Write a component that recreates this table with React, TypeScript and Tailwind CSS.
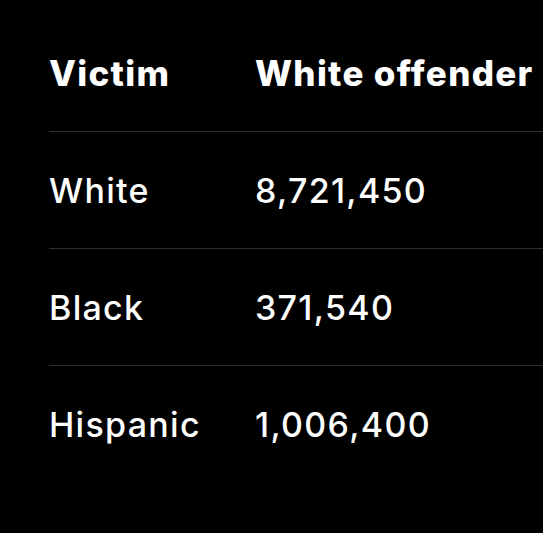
import React from "react";

const rows = [
  ["White", "8,721,450"],
  ["Black", "371,540"],
  ["Hispanic", "1,006,400"],
];

export default function App() {
  return (
    <div
      className="w-[543px] h-[533px] bg-black overflow-hidden pt-[15px] pl-[49px] text-white"
      style={{ fontFamily: "Inter, 'Noto Sans', sans-serif" }}
    >
      <div className="w-[700px]">
        <div className="flex items-center h-[117px] border-b border-[#2e2e2e] font-extrabold text-[35px] tracking-[1.3px]">
          <div className="w-[206px] shrink-0">Victim</div>
          <div className="whitespace-nowrap">White offender</div>
        </div>
        {rows.map(([a, b], i) => (
          <div
            key={a}
            className={
              i < rows.length - 1
                ? "flex items-center h-[117px] border-b border-[#2e2e2e] font-medium text-[34px] tracking-[1.3px]"
                : "flex items-center h-[117px] font-medium text-[34px] tracking-[1.3px]"
            }
          >
            <div className="w-[206px] shrink-0">{a}</div>
            <div className="whitespace-nowrap">{b}</div>
          </div>
        ))}
      </div>
    </div>
  );
}
